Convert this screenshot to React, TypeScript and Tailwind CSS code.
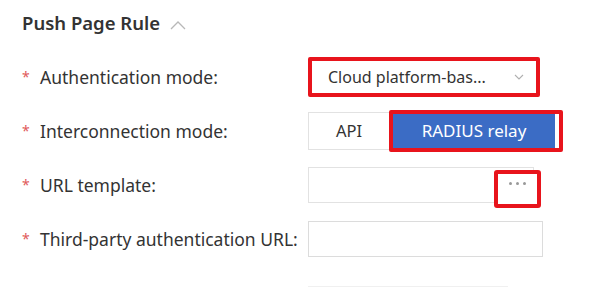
import React from 'react';

const Label = ({ text }: { text: string }) => (
  <div className="w-[286px] shrink-0 flex items-center text-[17.5px] text-[#333]">
    <span className="w-[18px] text-[#e05a5a] text-[14px] leading-none">*</span>
    <span>{text}</span>
  </div>
);

const App = () => {
  return (
    <div className="w-[609px] h-[288px] bg-white pl-[22px] pt-[9px] overflow-hidden font-['Noto_Sans',sans-serif] relative">
      {/* Section header */}
      <div className="h-[28px] flex items-center gap-[10px] text-[18.5px] font-semibold text-[#333]">
        <span>Push Page Rule</span>
        <svg width="16" height="10" viewBox="0 0 16 10" className="mt-[4px]">
          <path d="M1 9 L8 2 L15 9" fill="none" stroke="#b8b8b8" strokeWidth="1.3" />
        </svg>
      </div>

      <div className="mt-[20px] flex flex-col gap-[14px]">
        {/* Authentication mode */}
        <div className="h-[40px] flex items-center">
          <Label text="Authentication mode:" />
          <div className="w-[232px] h-[40px] border-4 border-[#e8141c] rounded-[2px] bg-white flex items-center justify-between pl-[16px] pr-[12px] text-[16px] text-[#333]">
            <span>Cloud platform-bas...</span>
            <svg width="10" height="6" viewBox="0 0 10 6">
              <path d="M1 1 L5 5 L9 1" fill="none" stroke="#b0b0b0" strokeWidth="1.1" />
            </svg>
          </div>
        </div>

        {/* Interconnection mode */}
        <div className="h-[40px] flex items-center">
          <Label text="Interconnection mode:" />
          <div className="flex items-center">
            <div className="w-[82px] h-[38px] border border-[#e2e2e2] flex items-center justify-center text-[16.5px] text-[#333]">
              API
            </div>
            <div className="w-[174px] h-[42px] -ml-px border-4 border-[#e8141c] rounded-[2px] bg-white flex">
              <div className="w-[162px] h-full bg-[#3b6cc5] flex items-center justify-center text-[17px] text-white">
                RADIUS relay
              </div>
            </div>
          </div>
        </div>

        {/* URL template */}
        <div className="h-[40px] flex items-center">
          <Label text="URL template:" />
          <div className="relative w-[226px] h-[36px] border border-[#e2e2e2] bg-white">
            <div className="absolute left-[185px] top-[2px] w-[47px] h-[38px] border-4 border-[#e8141c] rounded-[3px] bg-white flex justify-center pt-[8px]">
              <div className="flex gap-[4px]">
                <span className="w-[3px] h-[3px] rounded-full bg-[#999]" />
                <span className="w-[3px] h-[3px] rounded-full bg-[#999]" />
                <span className="w-[3px] h-[3px] rounded-full bg-[#999]" />
              </div>
            </div>
          </div>
        </div>

        {/* Third-party authentication URL */}
        <div className="h-[40px] flex items-center">
          <Label text="Third-party authentication URL:" />
          <div className="w-[235px] h-[36px] border border-[#dcdcdc] bg-white" />
        </div>
      </div>

      <div className="absolute left-[308px] top-[286px] w-[200px] border-t border-[#f0f0f0]" />
    </div>
  );
};

export default App;
